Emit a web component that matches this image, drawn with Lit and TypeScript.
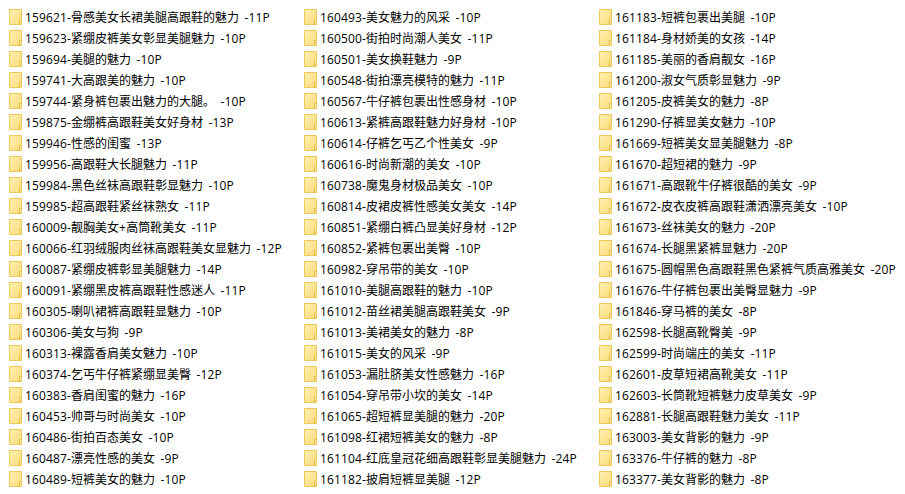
import { LitElement, html, css } from "lit";
import { customElement } from "lit/decorators.js";

const columns: string[][] = [
  ["159621-骨感美女长裙美腿高跟鞋的魅力 -11P","159623-紧绷皮裤美女彰显美腿魅力 -10P","159694-美腿的魅力 -10P","159741-大高跟美的魅力 -10P","159744-紧身裤包裹出魅力的大腿。 -10P","159875-金绷裤高跟鞋美女好身材 -13P","159946-性感的闺蜜 -13P","159956-高跟鞋大长腿魅力 -11P","159984-黑色丝袜高跟鞋彰显魅力 -10P","159985-超高跟鞋紧丝袜熟女 -11P","160009-靓胸美女+高筒靴美女 -11P","160066-红羽绒服肉丝袜高跟鞋美女显魅力 -12P","160087-紧绷皮裤彰显美腿魅力 -14P","160091-紧绷黑皮裤高跟鞋性感迷人 -11P","160305-喇叭裙裤高跟鞋显魅力 -10P","160306-美女与狗 -9P","160313-裸露香肩美女魅力 -10P","160374-乞丐牛仔裤紧绷显美臀 -12P","160383-香肩闺蜜的魅力 -16P","160453-帅哥与时尚美女 -10P","160486-街拍百态美女 -10P","160487-漂亮性感的美女 -9P","160489-短裤美女的魅力 -10P"],
  ["160493-美女魅力的风采 -10P","160500-街拍时尚潮人美女 -11P","160501-美女换鞋魅力 -9P","160548-街拍漂亮模特的魅力 -11P","160567-牛仔裤包裹出性感身材 -10P","160613-紧裤高跟鞋魅力好身材 -10P","160614-仔裤乞丐乙个性美女 -9P","160616-时尚新潮的美女 -10P","160738-魔鬼身材极品美女 -10P","160814-皮裙皮裤性感美女美女 -14P","160851-紧绷白裤凸显美好身材 -12P","160852-紧裤包裹出美臀 -10P","160982-穿吊带的美女 -10P","161010-美腿高跟鞋的魅力 -10P","161012-苗丝裙美腿高跟鞋美女 -9P","161013-美裙美女的魅力 -8P","161015-美女的风采 -9P","161053-漏肚脐美女性感魅力 -16P","161054-穿吊带小坎的美女 -14P","161065-超短裤显美腿的魅力 -20P","161098-红裙短裤美女的魅力 -8P","161104-红底皇冠花细高跟鞋彰显美腿魅力 -24P","161182-披肩短裤显美腿 -12P"],
  ["161183-短裤包裹出美腿 -10P","161184-身材娇美的女孩 -14P","161185-美丽的香肩靓女 -16P","161200-淑女气质彰显魅力 -9P","161205-皮裤美女的魅力 -8P","161290-仔裤显美女魅力 -10P","161669-短裤美女显美腿魅力 -8P","161670-超短裙的魅力 -9P","161671-高跟靴牛仔裤很酷的美女 -9P","161672-皮衣皮裤高跟鞋潇洒漂亮美女 -10P","161673-丝袜美女的魅力 -20P","161674-长腿黑紧裤显魅力 -20P","161675-圆帽黑色高跟鞋黑色紧裤气质高雅美女 -20P","161676-牛仔裤包裹出美臀显魅力 -9P","161846-穿马裤的美女 -8P","162598-长腿高靴臀美 -9P","162599-时尚端庄的美女 -11P","162601-皮草短裙高靴美女 -11P","162603-长筒靴短裤魅力皮草美女 -9P","162881-长腿高跟鞋魅力美女 -11P","163003-美女背影的魅力 -9P","163376-牛仔裤的魅力 -8P","163377-美女背影的魅力 -8P"],
];

const isCjk = /^[\u3000-\u9fff]/;

@customElement("app-root")
export class AppRoot extends LitElement {
  static styles = css`
    :host {
      display: block;
      width: 905px;
      height: 494px;
      background: #fff;
      overflow: hidden;
    }
    .grid {
      display: grid;
      grid-template-columns: repeat(3, 295px);
      padding: 7px 0 0 9px;
    }
    .row {
      display: flex;
      align-items: flex-start;
      gap: 3px;
      height: 21px;
      white-space: pre;
      font: 12px/21px "Open Sans", "Noto Sans CJK SC", sans-serif;
      color: #000;
    }
    .latin {
      letter-spacing: 0.15px;
      word-spacing: 2px;
    }
    svg {
      flex: none;
      display: block;
      margin-top: 2px;
    }
  `;

  private icon() {
    return html`<svg width="13" height="16" viewBox="0 0 13 16">
      <defs>
        <linearGradient id="g" x1="0" y1="0" x2="1" y2="1">
          <stop offset="0" stop-color="#fff0b0" />
          <stop offset="1" stop-color="#fcdb7c" />
        </linearGradient>
      </defs>
      <path d="M.5.5h12v15H.5z" fill="url(#g)" stroke="#efc85a" />
      <path d="M10.5 15.5v-5h2" fill="#fff3c4" stroke="#e6bb42" />
    </svg>`;
  }

  private label(text: string) {
    const runs = text.split(/([\u3000-\u9fff]+)/).filter((r) => r);
    return html`<span>${runs.map((r) =>
      isCjk.test(r) ? html`<span>${r}</span>` : html`<span class="latin">${r}</span>`
    )}</span>`;
  }

  render() {
    return html`<div class="grid">
      ${columns.map(
        (col) => html`<div>
          ${col.map((t) => html`<div class="row">${this.icon()}${this.label(t)}</div>`)}
        </div>`
      )}
    </div>`;
  }
}
